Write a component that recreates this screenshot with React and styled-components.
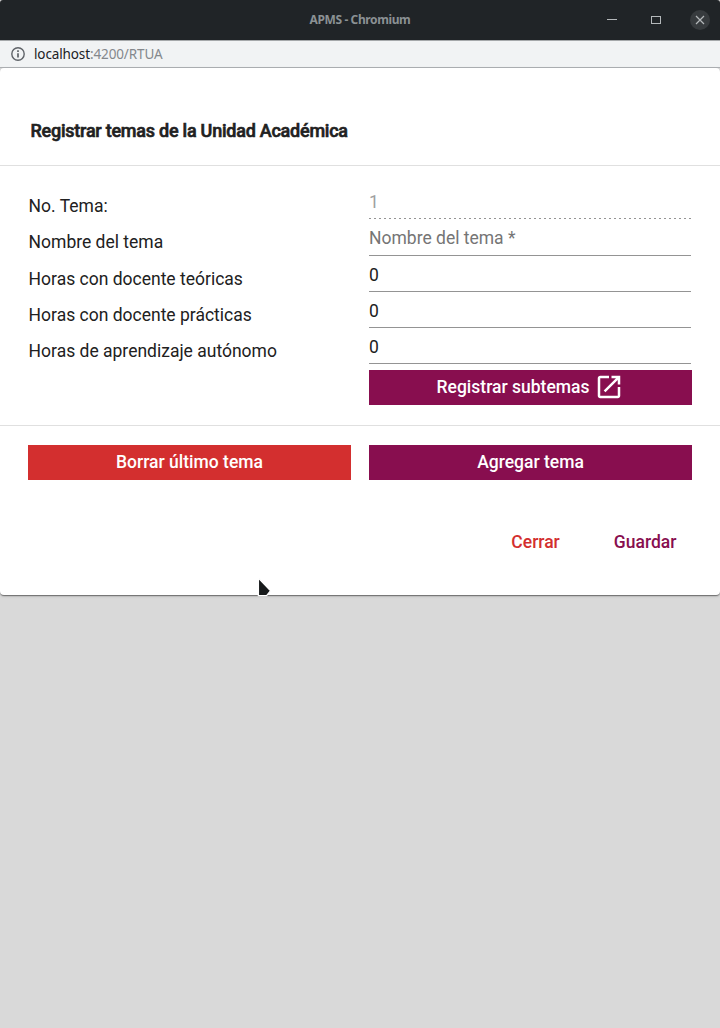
import React from "react";
import styled, { createGlobalStyle } from "styled-components";

const GlobalStyle = createGlobalStyle`
  * { box-sizing: border-box; }
  body { margin: 0; background: #d9d9d9; font-family: Roboto, sans-serif; color: #212121; }
`;

const Window = styled.div`
  width: 720px;
  height: 1028px;
  overflow: hidden;
  background: #d9d9d9;
`;

const TitleBar = styled.header`
  display: grid;
  grid-template-columns: 1fr auto 1fr;
  align-items: center;
  height: 40px;
  background: #202427;
  border-radius: 3px 3px 0 0;
  color: #8b9194;
  font: 700 12px/16px "Noto Sans", sans-serif;
`;

const WindowTitle = styled.span`
  grid-column: 2;
  letter-spacing: -0.39px;
  white-space: nowrap;
`;

const WindowControls = styled.div`
  display: flex;
  justify-content: flex-end;
  padding-right: 9px;
`;

const AddressBar = styled.div`
  display: flex;
  align-items: center;
  gap: 9px;
  height: 28px;
  padding-left: 11px;
  background: #f1f3f4;
  border-top: 1px solid #a5a8aa;
  border-bottom: 1px solid #afb2b5;
  color: #84888c;
  font: 13.5px/18px "Noto Sans", sans-serif;
  letter-spacing: -0.12px;
`;

const Host = styled.span`
  color: #202124;
`;

const Card = styled.main`
  height: 527px;
  background: #fff;
  border-radius: 4px;
  box-shadow: 0 2px 1px -1px rgba(0, 0, 0, 0.2), 0 1px 1px rgba(0, 0, 0, 0.24), 0 1px 3px rgba(0, 0, 0, 0.22);
`;

const CardTitle = styled.h1`
  height: 98px;
  margin: 0;
  padding: 51px 30px 0 30.5px;
  border-bottom: 1px solid #e0e0e0;
  font-size: 18px;
  font-weight: 500;
  line-height: 24px;
  letter-spacing: -0.24px;
  -webkit-text-stroke: 0.6px #212121;
`;

const Form = styled.form`
  display: grid;
  grid-template-columns: 323px 323px;
  grid-template-rows: 37px 37px 36px 36px 36px 41px;
  column-gap: 18px;
  height: 260px;
  padding: 16px 28px 0;
  border-bottom: 1px solid #e0e0e0;
`;

const Label = styled.label`
  padding: ${({ $first }) => ($first ? 12 : 11)}px 0 0 0.6px;
  font-size: 17.5px;
  line-height: 24px;
  white-space: nowrap;
`;

const Field = styled.input`
  width: 322px;
  height: 100%;
  padding: 2px 0 0;
  border: 0;
  border-radius: 0;
  border-bottom: 1px solid #949494;
  outline: 0;
  background: none;
  color: #212121;
  font: 17.5px/24px Roboto, sans-serif;

  &::placeholder {
    color: #757575;
    opacity: 1;
  }

  &:disabled {
    border-bottom: 0;
    background: repeating-linear-gradient(90deg, #949494 0 2px, transparent 2px 5px) left bottom / 100% 1px no-repeat;
    color: #a0a0a0;
  }
`;

const Button = styled.button`
  display: flex;
  flex: 1;
  align-items: center;
  justify-content: center;
  gap: 5px;
  height: 35px;
  padding: 0 0 2px;
  border: 0;
  background: ${({ $tone }) => ($tone === "warn" ? "#d32f2f" : "#880e4f")};
  color: #fff;
  font: 500 17.5px/24px Roboto, sans-serif;
`;

const SubtopicsButton = styled(Button)`
  grid-column: 2;
  align-self: end;
`;

const ButtonRow = styled.div`
  display: flex;
  gap: 18px;
  padding: 19px 28px 0;
`;

const Actions = styled.div`
  display: flex;
  justify-content: flex-end;
  gap: 54px;
  padding: 50px 43.6px 0 0;
`;

const TextButton = styled.button`
  padding: 0;
  border: 0;
  background: none;
  color: ${({ $tone }) => ($tone === "warn" ? "#d32f2f" : "#880e4f")};
  font: 500 17.5px/24px Roboto, sans-serif;
`;

const Pointer = styled.svg`
  position: absolute;
  left: 256px;
  top: 576px;
`;

const fields = [
  { id: "number", label: "No. Tema:", value: "1", disabled: true },
  { id: "name", label: "Nombre del tema", placeholder: "Nombre del tema *" },
  { id: "theory", label: "Horas con docente teóricas", value: "0" },
  { id: "practice", label: "Horas con docente prácticas", value: "0" },
  { id: "autonomous", label: "Horas de aprendizaje autónomo", value: "0" },
];

export default function App() {
  return (
    <Window>
      <GlobalStyle />
      <TitleBar>
        <WindowTitle>APMS - Chromium</WindowTitle>
        <WindowControls>
          <svg width="106" height="22" viewBox="0 0 106 22" fill="none" stroke="#b4b8ba">
            <path d="M2 10.5h10" />
            <rect x="46.5" y="7.5" width="9" height="7" />
            <circle cx="95" cy="11" r="10" fill="#373b3e" stroke="none" />
            <path d="m91 7 8 8m0-8-8 8" strokeWidth="1.2" />
          </svg>
        </WindowControls>
      </TitleBar>
      <AddressBar>
        <svg width="14" height="14" viewBox="0 0 14 14" fill="none" stroke="#5f6368" strokeWidth="1.4">
          <circle cx="7" cy="7" r="6.2" />
          <path d="M7 6.2v4.3M7 3.3v1.7" strokeWidth="1.7" />
        </svg>
        <span><Host>localhost</Host>:4200/RTUA</span>
      </AddressBar>
      <Card>
        <CardTitle>Registrar temas de la Unidad Académica</CardTitle>
        <Form>
          {fields.map(({ id, label, value, ...rest }, index) => (
            <React.Fragment key={id}>
              <Label htmlFor={id} $first={index === 0}>{label}</Label>
              <Field id={id} defaultValue={value} {...rest} />
            </React.Fragment>
          ))}
          <SubtopicsButton type="button">
            Registrar subtemas
            <svg width="30" height="30" viewBox="0 0 24 24" fill="currentColor">
              <path d="M19 19H5V5h7V3H5c-1.11 0-2 .9-2 2v14c0 1.1.89 2 2 2h14c1.1 0 2-.9 2-2v-7h-2v7zM14 3v2h3.59l-9.83 9.83 1.41 1.41L19 6.41V10h2V3h-7z" />
            </svg>
          </SubtopicsButton>
        </Form>
        <ButtonRow>
          <Button $tone="warn">Borrar último tema</Button>
          <Button>Agregar tema</Button>
        </ButtonRow>
        <Actions>
          <TextButton $tone="warn">Cerrar</TextButton>
          <TextButton>Guardar</TextButton>
        </Actions>
      </Card>
      <Pointer width="18" height="22" viewBox="0 0 18 22">
        <path d="M2.4 2v17.7h8.2l4-5z" fill="#171a1b" stroke="#fff" strokeWidth="1.3" />
      </Pointer>
    </Window>
  );
}
